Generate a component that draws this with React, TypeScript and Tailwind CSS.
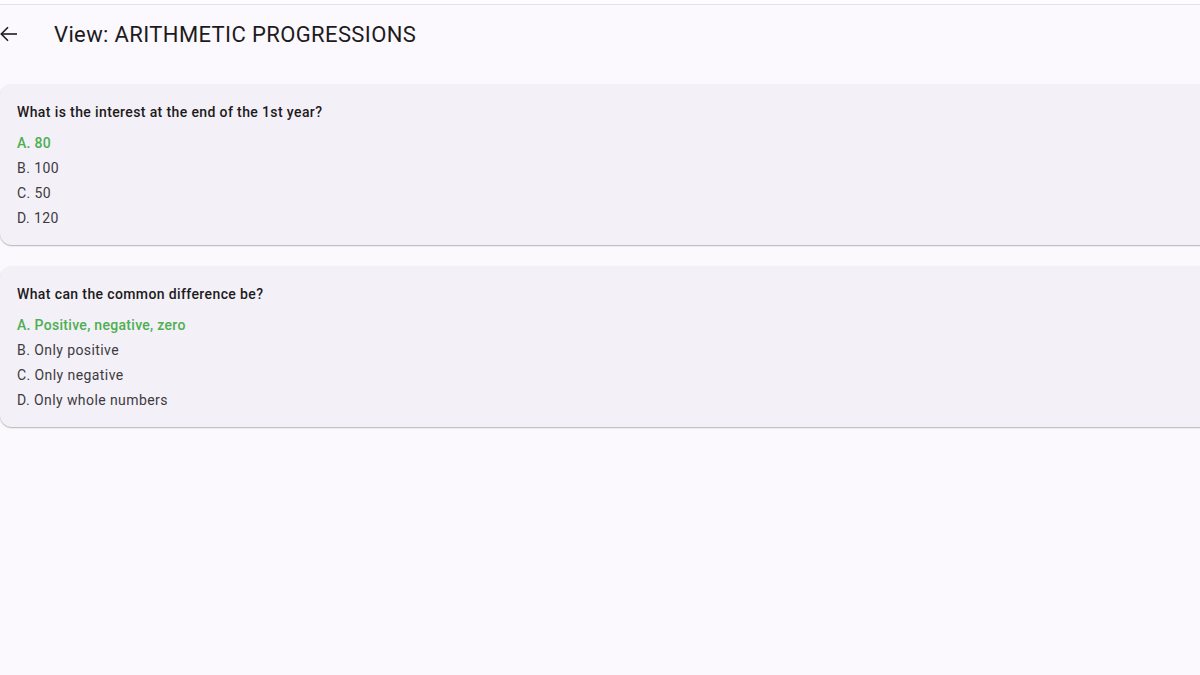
import React from "react";

type Question = {
  text: string;
  options: string[];
  correct: number;
};

const questions: Question[] = [
  {
    text: "What is the interest at the end of the 1st year?",
    options: ["80", "100", "50", "120"],
    correct: 0,
  },
  {
    text: "What can the common difference be?",
    options: ["Positive, negative, zero", "Only positive", "Only negative", "Only whole numbers"],
    correct: 0,
  },
];

const letters = ["A", "B", "C", "D"];

function BackArrow() {
  return (
    <svg width="18" height="16" viewBox="0 0 18 16" fill="none" stroke="#1d1b20" strokeWidth="1.6">
      <path d="M17 8H1.5" />
      <path d="M8 1.2L1.3 8L8 14.8" />
    </svg>
  );
}

function QuestionCard({ q }: { q: Question }) {
  return (
    <div className="w-[1220px] rounded-xl bg-[#f3f0f7] px-[17px] pt-[18px] pb-[14px] shadow-[0_1px_1.5px_rgba(0,0,0,0.28)]">
      <p className="text-[14px] leading-5 font-medium tracking-[0.38px] text-[#1d1b20]">{q.text}</p>
      <div className="mt-[9px] flex flex-col">
        {q.options.map((opt, i) => (
          <p
            key={i}
            className={
              i === q.correct
                ? "text-[14px] leading-[25px] font-medium tracking-[0.3px] text-[#4caf50]"
                : "text-[14px] leading-[25px] tracking-[0.42px] text-[#3d3b40]"
            }
          >
            {letters[i]}. {opt}
          </p>
        ))}
      </div>
    </div>
  );
}

export default function App() {
  return (
    <div className="h-[675px] w-[1200px] overflow-hidden bg-[#fbf8fe] font-['Roboto',sans-serif]">
      <div className="h-[4px] bg-[#fdfcff]" />
      <div className="h-px bg-[#e4e2e7]" />
      <header className="flex h-[58px] items-center">
        <div className="flex w-[54px] items-center">
          <BackArrow />
        </div>
        <h1 className="text-[22px] font-normal tracking-[0.38px] text-[#1d1b20]">View: ARITHMETIC PROGRESSIONS</h1>
      </header>
      <main className="mt-[21px] flex flex-col gap-[21px]">
        {questions.map((q, i) => (
          <QuestionCard key={i} q={q} />
        ))}
      </main>
    </div>
  );
}
